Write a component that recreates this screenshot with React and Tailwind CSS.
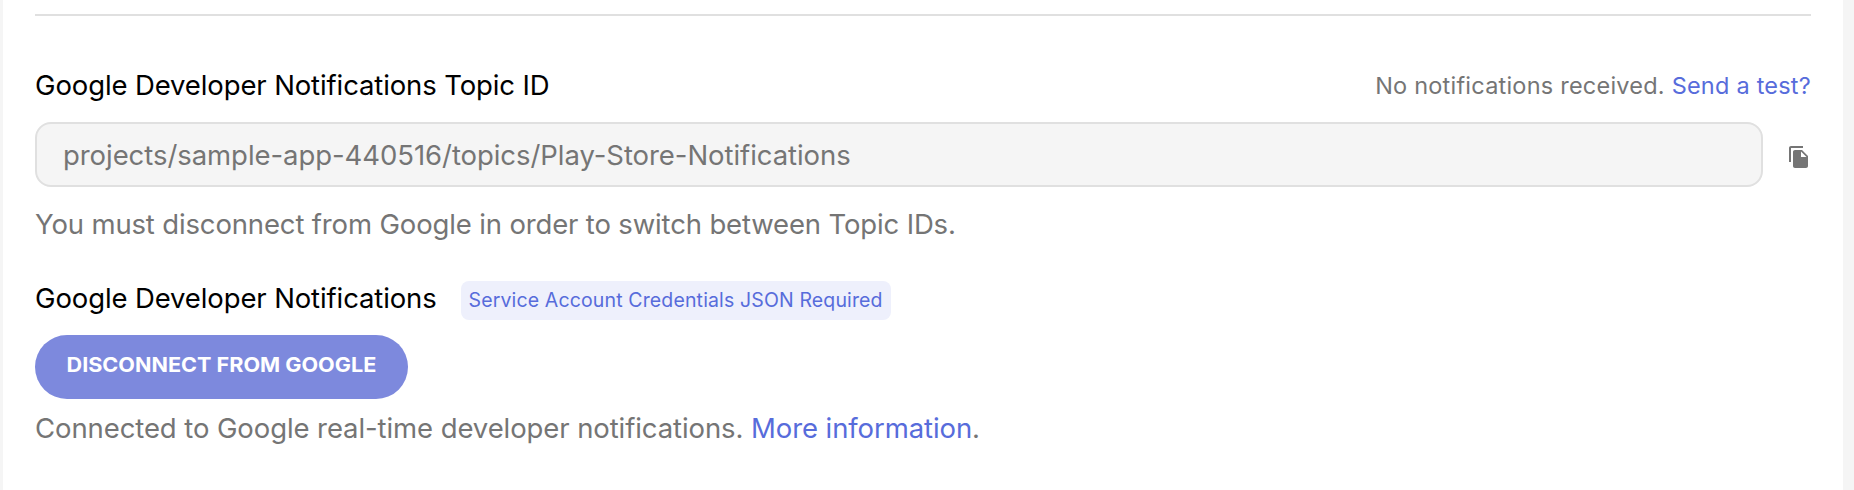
import { MdFileCopy } from "react-icons/md";

function Heading({ children }) {
  return (
    <h2 className="text-[27.5px] leading-[34px] tracking-[-0.12px] text-black whitespace-nowrap">{children}</h2>
  );
}

function Hint({ className, children }) {
  return (
    <p className={`text-[27.5px] leading-[34px] text-[#757575] whitespace-nowrap ${className}`}>{children}</p>
  );
}

export default function App() {
  return (
    <div className="h-[490px] w-full overflow-hidden bg-[#f5f5f5] pl-[3px] pr-[11px] font-['Inter',sans-serif]">
      <main className="flex h-full flex-col bg-white pl-8 pr-8 pt-3.5">
        <hr className="h-0.5 shrink-0 border-0 bg-[#e0e0e0]" />

        <div className="mt-[52px] flex items-center justify-between">
          <Heading>Google Developer Notifications Topic ID</Heading>
          <p className="h-[34px] text-[23.5px] leading-[35px] tracking-[0.22px] text-[#757575] whitespace-nowrap">
            No notifications received. <a href="#test" className="text-[#576cdb]">Send a test?</a>
          </p>
        </div>

        <div className="mt-5 flex items-center">
          <input
            readOnly
            value="projects/sample-app-440516/topics/Play-Store-Notifications"
            className="h-[65px] w-[1728px] rounded-2xl border-2 border-[#e0e0e0] bg-[#f5f5f5] px-[26px] text-[27.5px] tracking-[-0.06px] text-[#757575] outline-none"
          />
          <button aria-label="Copy" className="ml-6 mt-[5px] text-[#757575]">
            <MdFileCopy className="size-6" />
          </button>
        </div>

        <Hint className="mt-5 tracking-[-0.15px]">
          You must disconnect from Google in order to switch between Topic IDs.
        </Hint>

        <div className="mt-10 flex items-start">
          <Heading>Google Developer Notifications</Heading>
          <span className="ml-6 h-[39px] w-[430px] rounded-lg bg-[#eef0fc] text-center text-[19.5px] leading-[39px] tracking-[0.14px] text-[#576cdb] whitespace-nowrap">
            Service Account Credentials JSON Required
          </span>
        </div>

        <button className="mt-[15px] h-16 w-[373px] rounded-full bg-[#7d89dd] pb-1 text-[20px] font-bold text-white whitespace-nowrap">
          <span className="inline-block scale-x-[1.08]">DISCONNECT FROM GOOGLE</span>
        </button>

        <Hint className="mt-3 tracking-[-0.09px]">
          Connected to Google real-time developer notifications.{" "}
          <a href="#info" className="text-[#576cdb]">More information</a>.
        </Hint>
      </main>
    </div>
  );
}
